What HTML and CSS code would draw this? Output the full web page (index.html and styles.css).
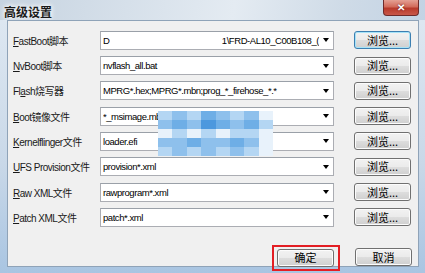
FILE: index.html
```html
<!DOCTYPE html>
<html lang="zh-CN">
<head>
  <meta charset="UTF-8">
  <title>高级设置</title>
  <link rel="stylesheet" href="styles.css">
</head>
<body>
  <div class="window">
    <div class="titlebar">
      <span class="title">高级设置</span>
      <div class="close-btn">&#x2715;</div>
    </div>

    <div class="client">
      <div class="rows">
        <div class="row">
          <label><u>F</u>astBoot脚本</label>
          <div class="combo">
            <span class="combo-text split"><span>D</span><span>1\FRD-AL10_C00B108_(</span></span>
            <span class="arrow"></span>
          </div>
          <button class="btn focused">浏览...</button>
        </div>
        <div class="row">
          <label><u>N</u>vBoot脚本</label>
          <div class="combo"><span class="combo-text">nvflash_all.bat</span><span class="arrow"></span></div>
          <button class="btn">浏览...</button>
        </div>
        <div class="row">
          <label>Fl<u>a</u>sh烧写器</label>
          <div class="combo"><span class="combo-text">MPRG*.hex;MPRG*.mbn;prog_*_firehose_*.*</span><span class="arrow"></span></div>
          <button class="btn">浏览...</button>
        </div>
        <div class="row">
          <label><u>B</u>oot镜像文件</label>
          <div class="combo"><span class="combo-text">*_msimage.mbn</span><span class="arrow"></span></div>
          <button class="btn">浏览...</button>
        </div>
        <div class="row">
          <label><u>K</u>ernelflinger文件</label>
          <div class="combo"><span class="combo-text">loader.efi</span><span class="arrow"></span></div>
          <button class="btn">浏览...</button>
        </div>
        <div class="row">
          <label><u>U</u>FS Provision文件</label>
          <div class="combo"><span class="combo-text">provision*.xml</span><span class="arrow"></span></div>
          <button class="btn">浏览...</button>
        </div>
        <div class="row">
          <label><u>R</u>aw XML文件</label>
          <div class="combo"><span class="combo-text">rawprogram*.xml</span><span class="arrow"></span></div>
          <button class="btn">浏览...</button>
        </div>
        <div class="row">
          <label><u>P</u>atch XML文件</label>
          <div class="combo"><span class="combo-text">patch*.xml</span><span class="arrow"></span></div>
          <button class="btn">浏览...</button>
        </div>
      </div>

      <div class="footer">
        <div class="highlight"><button class="btn">确定</button></div>
        <button class="btn">取消</button>
      </div>

      <div class="mosaic">
        <i class="m1"></i><i class="m2"></i><i class="m1"></i><i class="m3"></i><i class="m2"></i><i class="m1"></i><i class="m2"></i><i class="m0"></i>
        <i class="m2"></i><i class="m3"></i><i class="m2"></i><i class="m4"></i><i class="m3"></i><i class="m2"></i><i class="m3"></i><i class="m1"></i>
        <i class="m0"></i><i class="m1"></i><i class="m0"></i><i class="m1"></i><i class="m0"></i><i class="m1"></i><i class="m1"></i><i class="m0"></i>
        <i class="m2"></i><i class="m2"></i><i class="m3"></i><i class="m2"></i><i class="m2"></i><i class="m3"></i><i class="m2"></i><i class="m0"></i>
        <i class="m1"></i><i class="m2"></i><i class="m1"></i><i class="m2"></i><i class="m1"></i><i class="m2"></i><i class="m1"></i><i class="m0"></i>
      </div>
    </div>
  </div>
</body>
</html>
```

FILE: styles.css
```css
body {
  margin: 0;
  width: 425px;
  height: 273px;
  overflow: hidden;
  font-family: "Liberation Sans", "Noto Sans CJK SC", sans-serif;
}

.window {
  width: 425px;
  height: 273px;
  display: flex;
  flex-direction: column;
  background: linear-gradient(180deg, #cfdbe8 0%, #dde7f1 8%, #c9d8e8 60%, #a9c5e2 100%);
}

.titlebar {
  height: 22px;
  position: relative;
  background: linear-gradient(100deg, #c6d3e0 0%, #d6e0ea 30%, #e4ebf2 55%, #cfdbe7 80%, #c3d3e4 100%);
}

.title {
  position: absolute;
  left: 4px;
  top: 3px;
  font-family: "Noto Sans CJK SC", sans-serif;
  font-size: 12px;
  font-weight: bold;
  color: #1a1a1a;
  text-shadow: 0 0 4px #fff, 0 0 6px #fff;
}

.close-btn {
  position: absolute;
  right: 6px;
  top: 0;
  width: 36px;
  height: 16px;
  border: 1px solid #6e2b2b;
  border-top: none;
  border-radius: 0 0 4px 4px;
  background: linear-gradient(180deg, #e4a094 0%, #d26b5b 45%, #b83a2b 55%, #c8574a 100%);
  color: #fff;
  font-size: 10px;
  font-weight: bold;
  text-align: center;
  line-height: 15px;
  text-shadow: 0 0 2px #5a1010;
  box-sizing: border-box;
}

.client {
  position: relative;
  margin: 0 6px 6px 7px;
  flex: 1;
  background: #f0f0f0;
  border: 1px solid #8fa3b8;
  box-sizing: border-box;
  display: flex;
  flex-direction: column;
}

.rows {
  padding-top: 7px;
  display: flex;
  flex-direction: column;
}

.row {
  height: 25.3px;
  display: flex;
  align-items: center;
  padding-left: 5px;
}

.row label {
  width: 87px;
  font-size: 10px;
  letter-spacing: -0.5px;
  color: #1a1a1a;
  white-space: nowrap;
}

.combo {
  width: 234px;
  height: 19px;
  box-sizing: border-box;
  background: #fff;
  border: 1px solid #abadb3;
  border-top-color: #9aa0a8;
  display: flex;
  align-items: center;
  padding-left: 2px;
  margin-right: 20px;
}

.combo-text {
  flex: 1;
  min-width: 0;
  font-size: 9.5px;
  letter-spacing: -0.45px;
  color: #000;
  white-space: nowrap;
  overflow: hidden;
}

.combo-text.split {
  display: flex;
  justify-content: space-between;
}

.arrow {
  width: 0;
  height: 0;
  margin: 0 4px 0 4px;
  border-left: 3.5px solid transparent;
  border-right: 3.5px solid transparent;
  border-top: 4px solid #000;
}

.btn {
  width: 57px;
  height: 18px;
  padding: 0;
  box-sizing: border-box;
  border: 1px solid #707070;
  border-radius: 3px;
  background: linear-gradient(180deg, #f2f2f2 0%, #ebebeb 48%, #dddddd 52%, #cfcfcf 100%);
  font-family: "Noto Sans CJK SC", sans-serif;
  font-size: 11px;
  line-height: 15px;
  color: #000;
  box-shadow: inset 0 0 0 1px #fcfcfc;
}

.btn.focused {
  border-color: #3c7fb1;
  box-shadow: inset 0 0 0 1px #a6e3f8;
}

.footer {
  margin-top: auto;
  height: 36px;
  display: flex;
  align-items: flex-start;
  justify-content: flex-end;
  padding-right: 6px;
  gap: 15px;
}

.footer > .btn {
  margin-top: 18px;
}

.highlight {
  margin-top: 15px;
  border: 2px solid #e31e24;
  padding: 1px 4px 2px 3px;
}

.mosaic {
  position: absolute;
  left: 150px;
  top: 90px;
  width: 115px;
  height: 45px;
  display: grid;
  grid-template-columns: repeat(8, 1fr);
  grid-template-rows: repeat(5, 1fr);
}

.mosaic i { display: block; }
.m0 { background: #e8f2fb; }
.m1 { background: #b4d6f3; }
.m2 { background: #8ec0ec; }
.m3 { background: #6eaee6; }
.m4 { background: #4c98de; }
```
